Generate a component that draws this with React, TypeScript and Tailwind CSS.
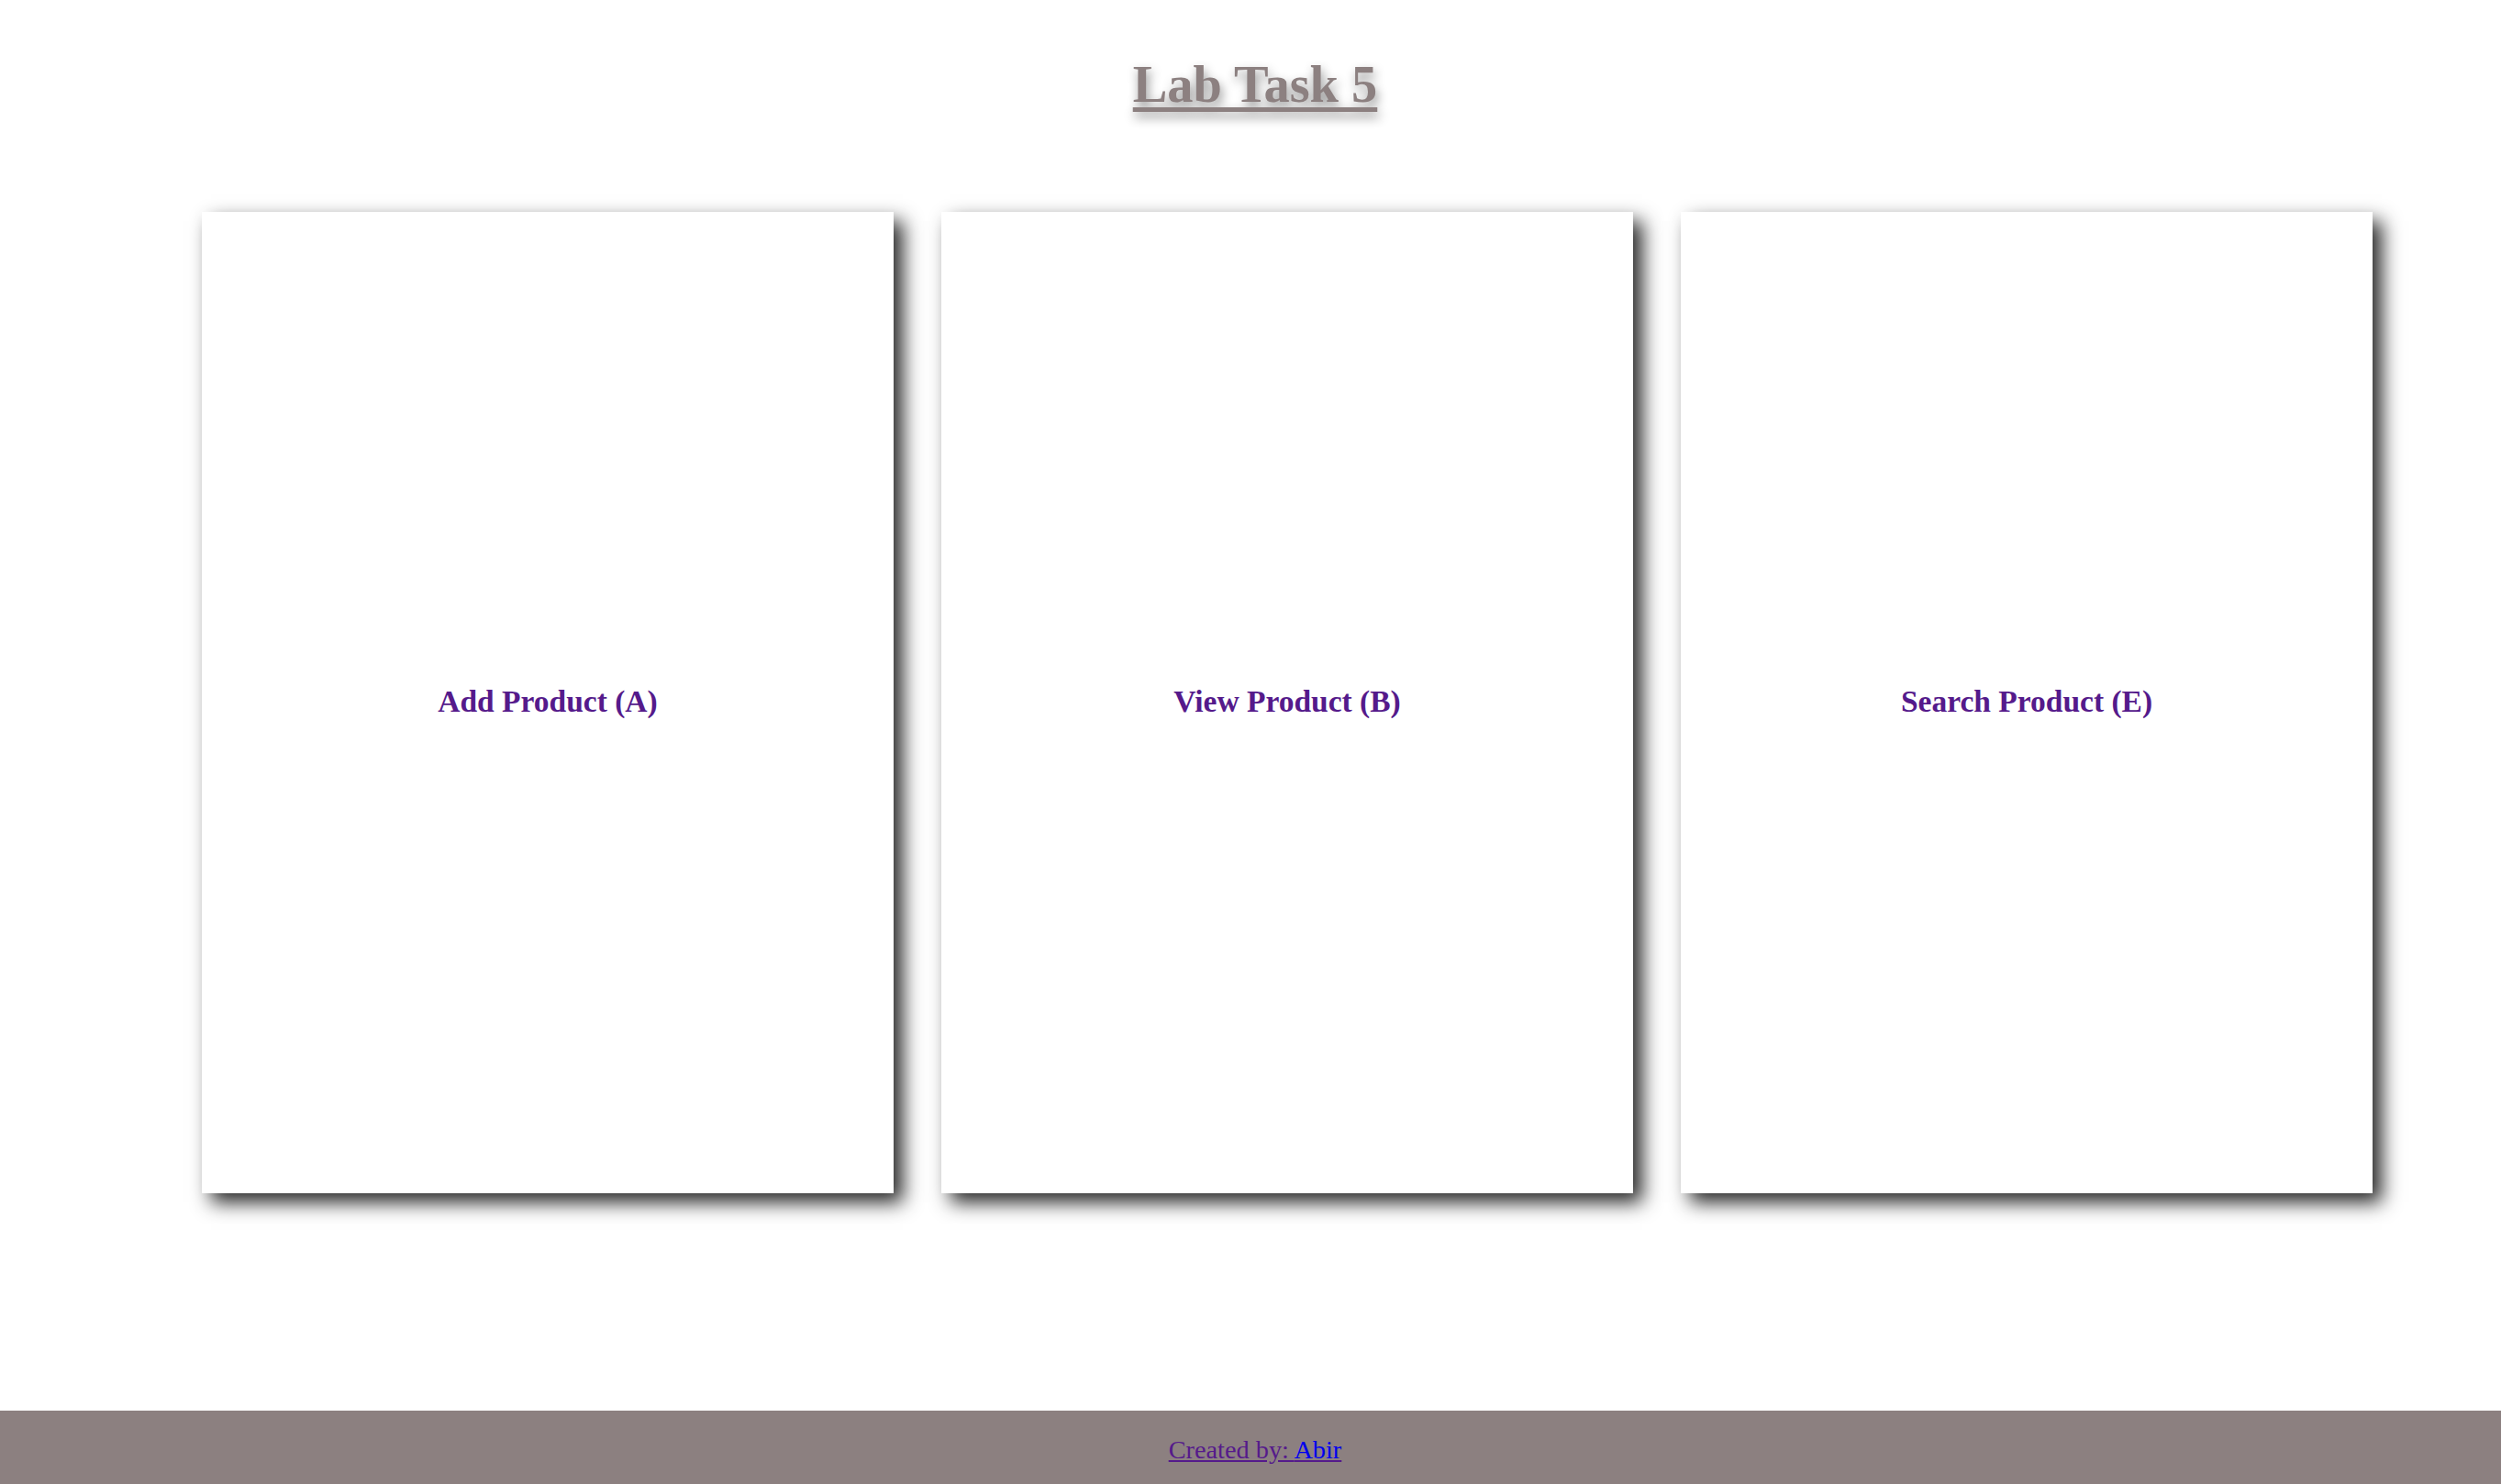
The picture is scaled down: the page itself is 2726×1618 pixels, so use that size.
import React from "react";

export default function App() {
  const cards = ["Add Product (A)", "View Product (B)", "Search Product (E)"];
  return (
    <div className="flex h-screen w-full flex-col bg-white" style={{ fontFamily: '"Liberation Serif", "Times New Roman", serif' }}>
      <header className="flex justify-center pl-[10px] pt-[62px]">
        <h1 className="text-[56.4px] font-bold leading-[61.5px] text-[#8c8080] underline decoration-[5px] underline-offset-[6px] [text-shadow:2px_6px_12px_rgba(0,0,0,0.45)]">
          Lab Task 5
        </h1>
      </header>
      <main className="flex gap-[52px] pl-[220px] pt-[107px]">
        {cards.map((c) => (
          <div
            key={c}
            className="flex h-[1070px] w-[754px] items-center justify-center bg-white shadow-[10px_10px_20px_rgba(0,0,0,0.85)]"
          >
            <h3 className="text-[33.5px] font-bold text-[#551A8B]">{c}</h3>
          </div>
        ))}
      </main>
      <footer className="mt-auto flex h-[80px] items-center justify-center bg-[#8c8080] pl-[10px] pt-[6px] text-[28.3px]">
        <a href="#" className="text-[#551A8B] underline">
          Created by: <span className="text-[#0000EE]">Abir</span>
        </a>
      </footer>
    </div>
  );
}
